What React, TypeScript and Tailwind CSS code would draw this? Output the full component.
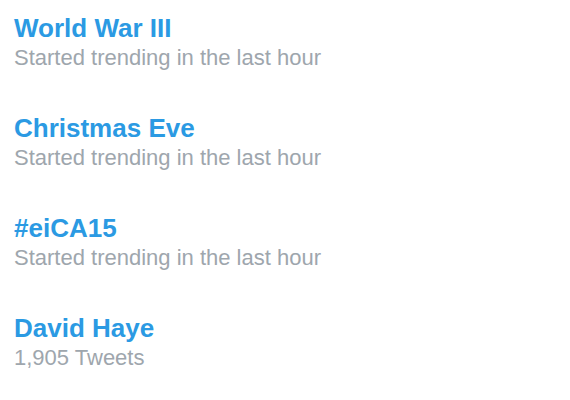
import React from "react";

const items = [
  { title: "World War III", sub: "Started trending in the last hour" },
  { title: "Christmas Eve", sub: "Started trending in the last hour" },
  { title: "#eiCA15", sub: "Started trending in the last hour" },
  { title: "David Haye", sub: "1,905 Tweets" },
];

export default function App() {
  return (
    <div
      className="w-[570px] h-[400px] bg-white overflow-hidden px-[14px] pt-[13px] flex flex-col gap-[41px]"
      style={{ fontFamily: '"Liberation Sans", Arial, sans-serif' }}
    >
      {items.map((it) => (
        <div key={it.title} className="flex flex-col gap-[1px]">
          <div className="text-[26px] leading-[30px] font-bold text-[#2b9ae3]">{it.title}</div>
          <div className="text-[22px] leading-[28px] text-[#9ea6ad]">{it.sub}</div>
        </div>
      ))}
    </div>
  );
}
